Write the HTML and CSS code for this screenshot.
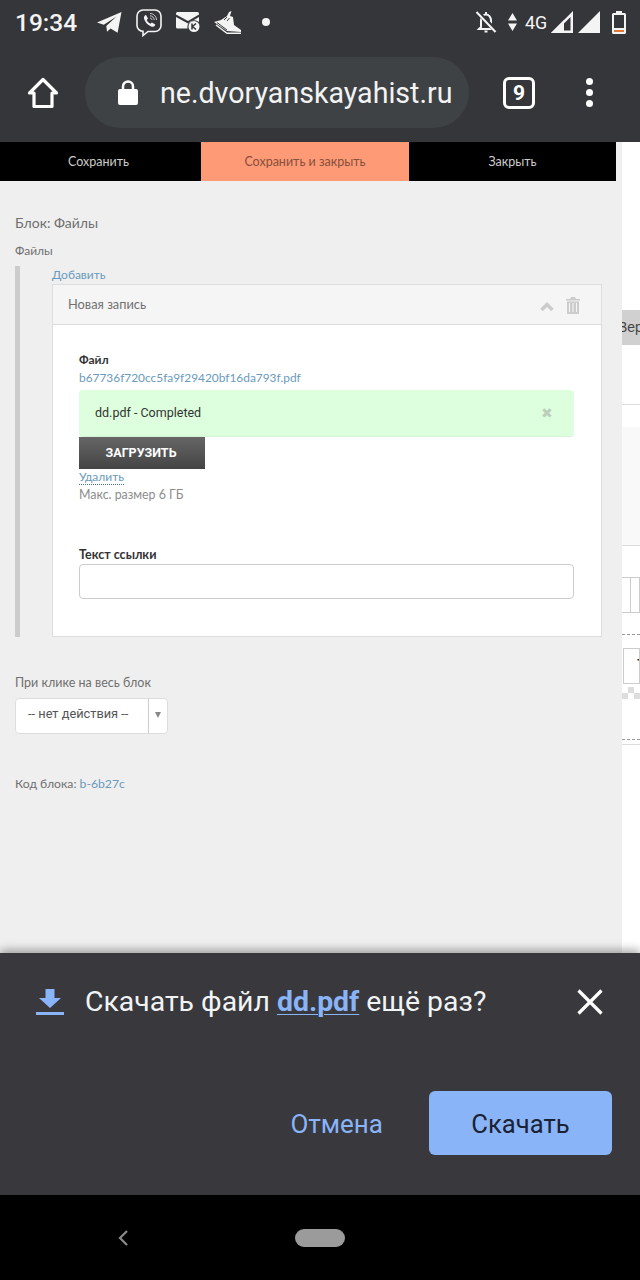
FILE: index.html
```html
<!DOCTYPE html>
<html lang="ru">
<head>
<meta charset="utf-8">
<title>Блок: Файлы</title>
<link rel="stylesheet" href="styles.css">
</head>
<body>
<header class="chrome">
  <div class="status">
    <span class="time">19:34</span>
    <svg class="i-tg" viewBox="0 0 25 21"><path fill="#f4f4f4" d="M0 10.500 24.500 0 20.600 20.800 13.600 16.500 10 19.700 9.300 14 19.500 4.600 6.800 12.800Z"/></svg>
    <svg class="i-viber" viewBox="0 0 26 28" fill="none" stroke="#f4f4f4"><path stroke-width="1.600" d="M7 1h12a6 6 0 0 1 6 6v9.500a6 6 0 0 1-6 6h-7l-5 4v-4.200a6 6 0 0 1-6-5.800V7a6 6 0 0 1 6-6Z"/><path fill="#f4f4f4" stroke="none" d="M8.500 6.500l1.500-.5 2 3.500-1.300 1.500c.8 1.800 2 3 3.800 3.800l1.300-1.300 3.500 2-.6 1.600c-1 1-2.500.8-4 .1-3-1.300-5-3.500-6.300-6.500-.6-1.500-.8-3 .6-4.200Z"/><path stroke-width=".8" d="M14 4.500c3.500 0 6.500 3 6.500 6.500M14 6.800c2.300 0 4.200 1.900 4.200 4.200M14 9c1 0 2 1 2 2"/></svg>
    <svg class="i-mail" viewBox="0 0 24 20"><path fill="#f4f4f4" d="M0 2.500 12 9 23 2.500V1.500Q23 0 21.500 0H1.500Q0 0 0 1.500ZM0 5V15Q0 16.500 1.500 16.500H11.500A7 7 0 0 1 23 10V5L12 11.500Z"/><circle cx="18" cy="14.500" r="5.500" fill="#f4f4f4"/><path fill="none" stroke="#35363a" stroke-width="1.500" d="M16 11.500v6M20 11.500l-3.500 3 3.500 3"/></svg>
    <svg class="i-shoe" viewBox="0 0 27 23" fill="none"><path fill="#f4f4f4" d="M13 5 15 1 17.500 0 16 5 19 6 20 14 27 19V21L13 20 0 11 7 9Z"/><path stroke="#35363a" d="M3 11.500 13 19M13 6 10 9M15.500 7 13 10"/><path stroke="#f4f4f4" stroke-width="1.400" d="M2 14 13 22.300H27"/></svg>
    <span class="dot-note"></span>
    <span class="status-right">
      <svg class="i-bell" viewBox="0 0 22 22" fill="none" stroke="#f4f4f4" stroke-width="2"><path d="M6 16V9.500C6 6 8.500 3.500 11 3.500S16 6 16 9.500V16L18 18H4ZM9.500 20.500H12.500M10 2H12"/><path stroke="#35363a" stroke-width="4.500" d="M3 1.500 21 20"/><path d="M1.500 1 20.500 21"/></svg>
      <svg class="i-arrows" viewBox="0 0 9 18"><path fill="#f4f4f4" d="M4.500 0 9 7.500H0ZM0 10.500h9L4.500 18Z"/></svg>
      <span class="net">4G</span>
      <svg class="i-sig" viewBox="0 0 22 22"><path fill="#f4f4f4" d="M22 0V22H0ZM19.500 6 6 19.500H19.500Z" fill-rule="evenodd"/><path fill="#f4f4f4" d="M0 22 13 9V22Z"/></svg>
      <svg class="i-sig i-sig2" viewBox="0 0 22 22"><path fill="#f4f4f4" d="M22 0V22H0Z"/></svg>
      <svg class="i-bat" viewBox="0 0 14 23"><path fill="#f4f4f4" d="M4 0h6v2h2.500Q14 2 14 3.500V21.500Q14 23 12.500 23H1.500Q0 23 0 21.500V3.500Q0 2 1.500 2H4Z"/><rect x="2" y="4" width="10" height="13" fill="#35363a"/><rect x="2" y="19" width="10" height="2" fill="#e07a3c"/></svg>
    </span>
  </div>
  <div class="toolbar">
    <svg class="i-home" viewBox="0 0 32 32" fill="none" stroke="#fff" stroke-width="3.200" stroke-linejoin="round"><path d="M16 2.500 2.500 16H7V29.500H25V16H29.500Z"/></svg>
    <div class="omnibox">
      <svg class="i-lock" viewBox="0 0 20 25"><path fill="none" stroke="#fff" stroke-width="2.500" d="M5 10V6.500a5 5 0 0 1 10 0V10"/><rect y="9" width="20" height="16" rx="2" fill="#fff"/></svg>
      <span class="url">ne.dvoryanskayahist.ru</span>
    </div>
    <span class="tabs">9</span>
    <span class="menu"><i></i><i></i><i></i></span>
  </div>
</header>

<div class="viewport">
  <main class="panel">
    <nav class="actions">
      <a class="act act-save">Сохранить</a>
      <a class="act act-primary">Сохранить и закрыть</a>
      <a class="act act-close">Закрыть</a>
    </nav>
    <div class="content">
      <h1 class="title">Блок: Файлы</h1>
      <div class="label">Файлы</div>
      <div class="repeater">
        <a class="link add">Добавить</a>
        <section class="card">
          <div class="card-head">
            <span class="card-title">Новая запись</span>
            <svg class="i-chev" viewBox="0 0 14 9"><path fill="none" stroke="#ccc" stroke-width="3.500" d="M1.500 8 7 2.500 12.500 8"/></svg>
            <svg class="i-trash" viewBox="0 0 14 17"><path fill="#ccc" d="M5 0h4l1 2h4v1.500H0V2h4ZM1 4.500h12V17H1ZM3 6v9h1V6Zm3.500 0v9h1V6ZM10 6v9h1V6Z" fill-rule="evenodd"/></svg>
          </div>
          <div class="card-body">
            <div class="field-name">Файл</div>
            <a class="link file">b67736f720cc5fa9f29420bf16da793f.pdf</a>
            <div class="notice">
              <span>dd.pdf - Completed</span>
              <span class="notice-x">✖</span>
            </div>
            <div class="upload">ЗАГРУЗИТЬ</div>
            <a class="link remove">Удалить</a>
            <div class="hint">Макс. размер 6 ГБ</div>
            <div class="field-name link-label">Текст ссылки</div>
            <div class="input"></div>
          </div>
        </section>
      </div>
      <div class="label click-label">При клике на весь блок</div>
      <div class="select">
        <span class="select-val">-- нет действия --</span>
        <span class="select-arrow"></span>
      </div>
      <div class="code">Код блока: <a class="link">b-6b27c</a></div>
    </div>
  </main>
  <aside class="side">
    <div class="side-tab">Вер</div>
    <div class="side-line"></div>
    <div class="side-band"></div>
    <div class="side-cells"><i></i><i></i></div>
    <div class="side-dash"></div>
    <div class="side-box">Т</div>
    <div class="side-check"></div>
    <div class="side-dash side-dash2"></div>
    <div class="side-rule"></div>
  </aside>
</div>

<section class="sheet">
  <div class="sheet-row">
    <svg class="i-dl" viewBox="0 0 28 26"><path fill="#8ab4f8" d="M9.500 0h9V9H25L14 19 3 9H9.500Z"/><rect y="23" width="28" height="3" fill="#8ab4f8"/></svg>
    <p class="sheet-text">Скачать файл <a class="sheet-file">dd.pdf</a> ещё раз?</p>
    <svg class="i-x" viewBox="0 0 26 26"><path stroke="#fff" stroke-width="3.200" d="M1.500 1.500 24.500 24.500M24.500 1.500 1.500 24.500"/></svg>
  </div>
  <div class="sheet-actions">
    <span class="btn-text">Отмена</span>
    <span class="btn-fill">Скачать</span>
  </div>
</section>

<footer class="navbar">
  <svg class="i-back" viewBox="0 0 12 18"><path fill="none" stroke="#8a8a8a" stroke-width="2.200" d="M10 2 3 9l7 7"/></svg>
  <span class="pill"></span>
</footer>
</body>
</html>
```
FILE: styles.css
```css
* { box-sizing: border-box; }
html, body { margin: 0; padding: 0; }
body { width: 640px; height: 1280px; overflow: hidden; font-family: Lato, "Open Sans", "Liberation Sans", sans-serif; background: #000; }
svg { display: block; flex: none; }
a { text-decoration: none; }

.chrome { height: 142px; background: #35363a; color: #fff; font-family: Roboto, sans-serif; }
.status { height: 44px; display: flex; align-items: center; padding: 0 14px 0 15px; }
.time { font-size: 24.500px; font-weight: 500; color: #f4f4f4; width: 62px; }
.i-tg { width: 25px; height: 21px; margin-left: 20px; }
.i-viber { width: 26px; height: 28px; margin-left: 14px; margin-top: 2px; }
.i-mail { width: 24px; height: 20px; margin-left: 14px; }
.i-shoe { width: 27px; height: 23px; margin-left: 14px; }
.dot-note { width: 8px; height: 8px; border-radius: 50%; background: #f4f4f4; margin-left: 21px; }
.status-right { margin-left: auto; display: flex; align-items: center; }
.i-bell { width: 22px; height: 22px; }
.i-arrows { width: 9px; height: 18px; margin-left: 11px; }
.net { font-size: 19px; color: #f4f4f4; margin-left: 8px; width: 26px; transform: scaleX(.94); transform-origin: left; }
.i-sig { width: 22px; height: 22px; }
.i-sig2 { margin-left: 5px; }
.i-bat { width: 14px; height: 23px; margin-left: 12px; }

.toolbar { height: 98px; display: flex; align-items: flex-start; padding: 13px 0 0 27px; }
.i-home { width: 32px; height: 32px; margin-top: 20px; }
.omnibox { width: 384px; height: 71px; margin-left: 26px; border-radius: 36px; background: #3f4245; display: flex; align-items: center; padding-left: 33px; }
.i-lock { width: 20px; height: 25px; }
.url { margin-left: 22px; font-size: 28.600px; white-space: nowrap; color: #f2f3f3; }
.tabs { width: 32px; height: 32px; margin: 20px 0 0 34px; border: 3.500px solid #fff; border-radius: 6px; display: flex; align-items: center; justify-content: center; font-size: 21px; font-weight: 700; }
.menu { margin: 21px 0 0 51px; display: flex; flex-direction: column; gap: 4px; }
.menu i { width: 7px; height: 7px; border-radius: 50%; background: #fff; }

.viewport { height: 811px; display: flex; background: #fff; }
.panel { width: 622px; background: #efefef; color: #555; }
.actions { width: 616px; height: 39px; display: flex; background: #000; font-size: 12.500px; }
.act { display: flex; align-items: center; justify-content: center; color: #ccc; padding-bottom: 1px; }
.act-save { width: 201px; padding-right: 4px; }
.act-primary { width: 208px; background: #ff9a76; color: #85503c; }
.act-close { width: 207px; }

.content { padding: 32px 20px 0 15px; }
.title { margin: 0; font-size: 14px; line-height: 20px; font-weight: 400; color: #707070; }
.label { margin-top: 10px; font-size: 12px; line-height: 16px; color: #707070; }
.link { color: #6a9abd; }
.repeater { margin-top: 7px; height: 371px; border-left: 5px solid #ccc; padding-left: 32px; font-size: 12px; }
.add { display: block; height: 18px; line-height: 18px; font-size: 12px; }
.card { width: 550px; height: 353px; background: #fff; border: 1px solid #ddd; }
.card-head { height: 40px; background: #f5f5f5; border-bottom: 1px solid #ddd; display: flex; align-items: center; padding-left: 15px; font-size: 12.800px; color: #707070; }
.card-title { padding-bottom: 2px; }
.i-chev { width: 14px; height: 9px; margin-left: auto; margin-top: 3px; }
.i-trash { width: 14px; height: 17px; margin: 2px 21px 0 12px; }
.card-body { padding: 26px 27px 0 26px; }
.field-name { font-size: 12px; line-height: 17px; font-weight: 700; color: #333; }
.file { display: block; font-size: 11.900px; line-height: 20px; margin-bottom: -2px; white-space: nowrap; }
.notice { margin-top: 4px; height: 47px; padding: 0 21px 1px 16px; border-radius: 4px; border-bottom: 1px dotted #cdebcd; background: #dfd; display: flex; align-items: center; justify-content: space-between; font-family: Roboto, sans-serif; font-size: 12.500px; color: #333; }
.notice-x { font-size: 14px; color: #bccfbc; }
.upload { width: 126px; height: 32px; background: linear-gradient(#666, #444); display: flex; align-items: center; justify-content: center; color: #fff; font-family: Roboto, sans-serif; font-weight: 700; font-size: 12.500px; padding: 0 2px 1px 0; }
.remove { display: inline-block; height: 16px; line-height: 15px; font-size: 12px; border-bottom: 1px dotted #3f6f95; }
.hint { margin-top: 1px; font-size: 12.400px; line-height: 18px; color: #8c8c8c; }
.link-label { margin-top: 42px; font-size: 12.500px; }
.input { margin-top: 1px; width: 495px; height: 35px; border: 1px solid #ccc; border-radius: 4px; background: #fff; }

.click-label { margin-top: 38px; font-size: 12.500px; }
.select { margin-top: 7px; width: 153px; height: 36px; display: flex; border: 1px solid #ddd; border-radius: 4px; background: #fff; }
.select-val { width: 133px; border-right: 1px solid #ccc; padding-left: 12px; font-family: Roboto, sans-serif; font-size: 12.800px; line-height: 30px; color: #555; }
.select-arrow { width: 0; height: 0; margin: 13px 0 0 6px; border: 3.500px solid transparent; border-top: 6px solid #888; }
.code { margin-top: 42px; font-size: 12.200px; line-height: 16px; color: #707070; }

.side { flex: 1; min-width: 0; overflow: hidden; font-family: "Liberation Sans", sans-serif; color: #444; }
.side-tab { margin-top: 168px; height: 35px; width: 18px; background: #d0d0d0; font-size: 14px; line-height: 35px; white-space: nowrap; overflow: hidden; text-indent: -4px; }
.side-line { margin-top: 59px; height: 1px; background: #ddd; }
.side-band { margin-top: 22px; height: 119px; background: #f9f9f9; border-bottom: 1px solid #ddd; }
.side-cells { margin-top: 31px; height: 36px; display: flex; border-top: 1px solid #ccc; border-bottom: 1px solid #ccc; }
.side-cells i { width: 13px; border-right: 1px solid #ccc; }
.side-dash { margin-top: 21px; border-top: 1px dashed #999; }
.side-box { margin-top: 13px; margin-left: 1px; height: 36px; border: 1px solid #ccc; padding-left: 13px; background: #fff; font-size: 20px; line-height: 34px; color: #222; white-space: nowrap; overflow: hidden; }
.side-check { margin-top: 3px; height: 12px; background: repeating-conic-gradient(#ddd 0 25%, #fff 0 50%) 0 0 / 12px 12px; }
.side-dash2 { margin-top: 40px; }
.side-rule { margin-top: 4px; height: 1px; background: #ddd; }

.sheet { position: relative; height: 242px; background: #38383d; box-shadow: 0 -3px 9px rgba(0,0,0,.35); font-family: Roboto, sans-serif; }
.sheet-row { height: 138px; padding: 36px 36px 0; display: flex; align-items: flex-start; }
.i-dl { width: 28px; height: 26px; }
.sheet-text { margin: -5px 0 0 21px; font-size: 28.400px; line-height: 36px; color: #f1f3f4; white-space: nowrap; }
.sheet-file { color: #8ab4f8; font-weight: 700; text-decoration: underline; text-decoration-thickness: 1px; text-underline-offset: 3px; }
.i-x { width: 26px; height: 26px; margin-left: auto; margin-right: 1px; }
.sheet-actions { display: flex; align-items: center; justify-content: flex-end; padding-right: 28px; }
.btn-text { margin-right: 46px; font-size: 26px; font-weight: 400; color: #8ab4f8; padding-top: 1px; }
.btn-fill { width: 183px; height: 64px; padding-top: 1px; border-radius: 6px; background: #8ab4f8; color: #1a2233; font-size: 25.600px; font-weight: 400; display: flex; align-items: center; justify-content: center; }

.navbar { height: 85px; background: #000; display: flex; align-items: center; padding-left: 117px; }
.i-back { width: 12px; height: 18px; }
.pill { width: 50px; height: 18px; border-radius: 9px; background: #9b9b9b; margin-left: 166px; }
```
